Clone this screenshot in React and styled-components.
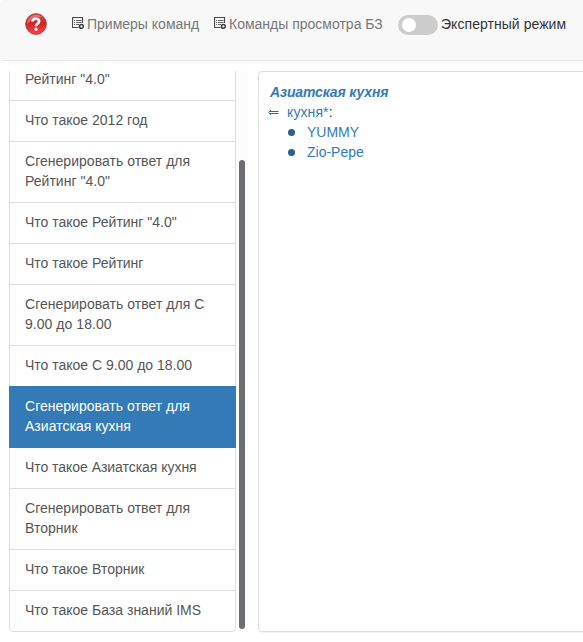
import React from "react";
import styled, { createGlobalStyle } from "styled-components";

const GlobalStyle = createGlobalStyle`
  * { box-sizing: border-box; }
  body {
    margin: 0;
    background: #fff;
    color: #333;
    font: 14px/20px "Liberation Sans", Arial, sans-serif;
    overflow: hidden;
  }
`;

const Page = styled.div`
  height: 642px;
  display: flex;
  flex-direction: column;
  overflow: hidden;
`;

const Toolbar = styled.header`
  flex: none;
  height: 61px;
  display: flex;
  align-items: flex-start;
  padding: 13px 0 0 25px;
  background: #f8f8f8;
  border: solid #e7e7e7;
  border-width: 0 0 1px;
  border-radius: 4px 0 0 4px;
  white-space: nowrap;
`;

const HelpButton = styled.a`
  display: flex;
  width: 22px;
  height: 22px;
  margin-right: 25px;
`;

const CommandLink = styled.a`
  display: flex;
  width: ${(p) => p.$width}px;
  margin-right: ${(p) => p.$gap}px;
  padding-top: 1px;
  gap: 3px;
  color: #777;

  svg { flex: none; margin-top: 3px; }
`;

const Toggle = styled.button`
  width: 40px;
  height: 20px;
  margin: 2px 3px 0 0;
  padding: 3px 4px;
  border: 0;
  border-radius: 10px;
  background: #ccc;
`;

const Knob = styled.span`
  display: block;
  width: 14px;
  height: 14px;
  border-radius: 50%;
  background: #fff;
`;

const ToggleLabel = styled.span`
  padding-top: 1px;
  letter-spacing: 0.05px;
`;

const Content = styled.main`
  display: flex;
  height: 561px;
  margin: 10px 0 0 9px;
`;

const History = styled.ul`
  width: 227px;
  height: 561px;
  margin: 0;
  padding: 0;
  list-style: none;
  overflow: hidden;
  display: flex;
  flex-direction: column;
  justify-content: flex-end;
`;

const HistoryItem = styled.li`
  flex: none;
  padding: ${(p) => (p.$cut ? 0 : 9)}px 15px 11px;
  border: 1px solid ${(p) => (p.$active ? "#337ab7" : "#ddd")};
  border-top-width: ${(p) => (p.$cut ? 0 : 1)}px;
  background: ${(p) => (p.$active ? "#337ab7" : "#fff")};
  color: ${(p) => (p.$active ? "#fff" : "#555")};
  position: relative;
  z-index: ${(p) => (p.$active ? 1 : 0)};
  letter-spacing: ${(p) => p.$track || 0}px;
  white-space: pre-line;

  & + & { margin-top: -1px; }
  &:last-child { border-radius: 0 0 4px 4px; }
`;

const ScrollTrack = styled.div`
  width: 12px;
  padding: 89px 3px 3px;
  background: #fcfcfc;
`;

const ScrollThumb = styled.div`
  height: 469px;
  border-radius: 3px;
  background: #6b6e6f;
`;

const Answer = styled.section`
  flex: 1;
  margin-left: 10px;
  padding: 10px 0 0 9px;
  border: 1px solid #ddd;
  border-right: 0;
  border-radius: 4px 0 0 4px;
  box-shadow: 0 1px 1px rgba(0, 0, 0, 0.05);
`;

const Title = styled.div`
  padding-left: 2px;
  color: #337ab7;
  font-weight: bold;
  font-style: italic;
  letter-spacing: -0.15px;
`;

const Relation = styled.div`
  display: flex;
  align-items: center;
  gap: 8px;

  a { color: #337ab7; letter-spacing: 0.1px; }
`;

const ResultList = styled.ul`
  margin: 0;
  padding: 0 0 0 20px;
  list-style: none;
`;

const Result = styled.li`
  display: flex;
  align-items: center;
  gap: 12px;
  color: #337ab7;
`;

const Bullet = styled.span`
  width: 7px;
  height: 7px;
  border-radius: 50%;
  background: #286090;
`;

const HelpIcon = () => (
  <svg width="22" height="22" viewBox="0 0 22 22">
    <defs>
      <linearGradient id="red" x1="0" y1="0" x2="0" y2="1">
        <stop offset="0" stopColor="#d5504f" />
        <stop offset=".45" stopColor="#cf2427" />
        <stop offset="1" stopColor="#fb4648" />
      </linearGradient>
    </defs>
    <circle cx="11" cy="11" r="10.4" fill="url(#red)" stroke="#b52c2d" strokeWidth=".8" />
    <path d="M2 12A9.2 9.2 0 0 1 17 4C11 4 5 7 2 12Z" fill="#fff" opacity=".25" />
    <path d="M7.6 8.4C7.6 4.8 14.2 4.8 14.2 8.3C14.2 10.7 11 10.6 11 13.2" fill="none" stroke="#fff" strokeWidth="2.6" />
    <circle cx="11" cy="16.2" r="1.6" fill="#fff" />
  </svg>
);

const ListIcon = () => (
  <svg width="12" height="13" viewBox="0 0 12 13">
    <path d="M6.5 10.5H.5V.5H10.5V6" fill="none" stroke="#4a4a4a" strokeWidth="1.2" />
    <path d="M2 3.5h1M4 3.5H9.5M2 5.5h1M4 5.5H9.5M2 7.5h1M4 7.5H7" stroke="#666" strokeWidth="1.1" />
    <circle cx="9.4" cy="9.4" r="1.9" fill="#f8f8f8" stroke="#3c3c3c" strokeWidth="1.5" />
  </svg>
);

const ArrowIcon = () => (
  <svg width="11" height="7" viewBox="0 0 11 7">
    <path d="M2 2.5H10.5M2 4.5H10.5M3 .9L.9 3.5L3 6.1" fill="none" stroke="#2c679c" strokeWidth="1" />
  </svg>
);

const history = [
  { text: 'Рейтинг "4.0"', cut: true },
  { text: "Что такое 2012 год" },
  { text: 'Сгенерировать ответ для\nРейтинг "4.0"', track: 0.03 },
  { text: 'Что такое Рейтинг "4.0"' },
  { text: "Что такое Рейтинг" },
  { text: "Сгенерировать ответ для С\n9.00 до 18.00", track: 0.04 },
  { text: "Что такое С 9.00 до 18.00" },
  { text: "Сгенерировать ответ для\nАзиатская кухня", active: true, track: 0.02 },
  { text: "Что такое Азиатская кухня", track: -0.04 },
  { text: "Сгенерировать ответ для\nВторник", track: 0.03 },
  { text: "Что такое Вторник" },
  { text: "Что такое База знаний IMS" },
];

export default function App() {
  return (
    <Page>
      <GlobalStyle />
      <Toolbar>
        <HelpButton><HelpIcon /></HelpButton>
        <CommandLink $width={127} $gap={15}><ListIcon />Примеры команд</CommandLink>
        <CommandLink $width={168} $gap={16}><ListIcon />Команды просмотра БЗ</CommandLink>
        <Toggle><Knob /></Toggle>
        <ToggleLabel>Экспертный режим</ToggleLabel>
      </Toolbar>
      <Content>
        <History>
          {history.map((h, i) => (
            <HistoryItem key={i} $cut={h.cut} $active={h.active} $track={h.track}>{h.text}</HistoryItem>
          ))}
        </History>
        <ScrollTrack><ScrollThumb /></ScrollTrack>
        <Answer>
          <Title>Азиатская кухня</Title>
          <Relation><ArrowIcon /><span><a>кухня*</a>:</span></Relation>
          <ResultList>
            <Result><Bullet />YUMMY</Result>
            <Result><Bullet />Zio-Pepe</Result>
          </ResultList>
        </Answer>
      </Content>
    </Page>
  );
}
